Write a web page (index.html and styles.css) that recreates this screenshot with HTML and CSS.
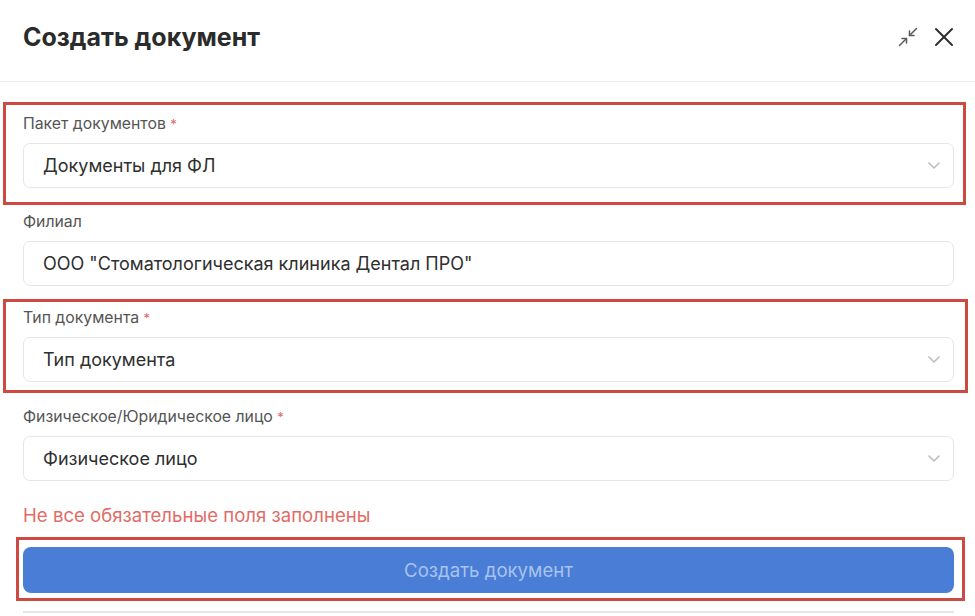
FILE: index.html
```html
<!DOCTYPE html>
<html lang="ru">
<head>
<meta charset="utf-8">
<title>Создать документ</title>
<link rel="stylesheet" href="styles.css">
</head>
<body>
<div class="modal">
  <header class="modal-head">
    <h1 class="title">Создать документ</h1>
    <div class="head-actions">
      <svg class="icon-shrink" width="20" height="20" viewBox="0 0 20 20" fill="none" stroke="#5a5a5a" stroke-width="1.5" stroke-linecap="round" stroke-linejoin="round">
        <path d="M18.5 1.5 L11.5 8.5"/>
        <path d="M11.5 4 V8.5 H16"/>
        <path d="M1.5 18.5 L8.5 11.5"/>
        <path d="M4 11.5 H8.5 V16"/>
      </svg>
      <svg class="icon-close" width="20" height="20" viewBox="0 0 20 20" fill="none" stroke="#2e2e2e" stroke-width="2" stroke-linecap="round">
        <path d="M2 2 L18 18"/>
        <path d="M18 2 L2 18"/>
      </svg>
    </div>
  </header>

  <form class="form">
    <div class="hl hl-1">
      <div class="label">Пакет документов <span class="req">*</span></div>
      <div class="control select">
        <span class="value">Документы для ФЛ</span>
        <svg class="chev" width="12" height="7" viewBox="0 0 12 7" fill="none" stroke="#bdbdbd" stroke-width="1.6" stroke-linecap="round" stroke-linejoin="round"><path d="M1 1 L6 6 L11 1"/></svg>
      </div>
    </div>

    <div class="field field-branch">
      <div class="label">Филиал</div>
      <div class="control">
        <span class="value">ООО "Стоматологическая клиника Дентал ПРО"</span>
      </div>
    </div>

    <div class="hl hl-2">
      <div class="label">Тип документа <span class="req">*</span></div>
      <div class="control select">
        <span class="value">Тип документа</span>
        <svg class="chev" width="12" height="7" viewBox="0 0 12 7" fill="none" stroke="#bdbdbd" stroke-width="1.6" stroke-linecap="round" stroke-linejoin="round"><path d="M1 1 L6 6 L11 1"/></svg>
      </div>
    </div>

    <div class="field field-person">
      <div class="label">Физическое/Юридическое лицо <span class="req">*</span></div>
      <div class="control select">
        <span class="value">Физическое лицо</span>
        <svg class="chev" width="12" height="7" viewBox="0 0 12 7" fill="none" stroke="#bdbdbd" stroke-width="1.6" stroke-linecap="round" stroke-linejoin="round"><path d="M1 1 L6 6 L11 1"/></svg>
      </div>
    </div>

    <div class="error">Не все обязательные поля заполнены</div>

    <div class="hl hl-3">
      <button type="button" class="submit">Создать документ</button>
    </div>

    <div class="bottom-line"></div>
  </form>
</div>
</body>
</html>
```

FILE: styles.css
```css
* { box-sizing: border-box; }

html, body {
  margin: 0;
  padding: 0;
  background: #ffffff;
  overflow: hidden;
}

body {
  font-family: Inter, "Noto Sans", "Liberation Sans", sans-serif;
  color: #333333;
}

.modal {
  width: 975px;
  height: 616px;
}

.modal-head {
  height: 82px;
  border-bottom: 1px solid #ececec;
  display: flex;
  align-items: center;
  justify-content: space-between;
  padding: 0 21px 8px 23px;
}

.title {
  margin: 0;
  font-size: 25px;
  font-weight: 700;
  color: #2b2b2b;
}

.head-actions {
  display: flex;
  align-items: center;
  gap: 16px;
}

.icon-shrink, .icon-close { display: block; }

.form {
  padding: 0 21px 0 23px;
  display: flex;
  flex-direction: column;
}

.label {
  font-size: 15.8px;
  line-height: 20px;
  height: 20px;
  color: #555555;
  margin-bottom: 9px;
}

.req {
  color: #e06a66;
  font-size: 13px;
}

.control {
  height: 45px;
  border: 1px solid #e6e6e6;
  border-radius: 7px;
  display: flex;
  align-items: center;
  justify-content: space-between;
  padding: 0 13px 0 19px;
  background: #fff;
}

.value {
  font-size: 18px;
  color: #2f2f2f;
}

.chev { display: block; }

.hl {
  border: 3px solid #cc4a41;
}

.hl-1 {
  margin: 20px -12px 0 -20px;
  padding: 9px 9px 14px 17px;
}

.field-branch { margin-top: 7px; }

.hl-2 {
  margin: 13px -14px 0 -20px;
  padding: 6px 11px 8px 17px;
}

.field-person { margin-top: 14px; }

.error {
  margin-top: 22px;
  font-size: 18.6px;
  line-height: 24px;
  color: #e36b66;
}

.hl-3 {
  margin: 10px -11px 0 -7px;
  padding: 7px 8px 5px 4px;
}

.submit {
  display: block;
  width: 100%;
  height: 46px;
  border: none;
  border-radius: 8px;
  background: #4a7dd6;
  color: #a8c3ee;
  font-family: Inter, "Noto Sans", "Liberation Sans", sans-serif;
  font-size: 18.6px;
  cursor: not-allowed;
}

.bottom-line {
  margin-top: 10px;
  border-top: 2px solid #e6e6e6;
  height: 4px;
}
```
